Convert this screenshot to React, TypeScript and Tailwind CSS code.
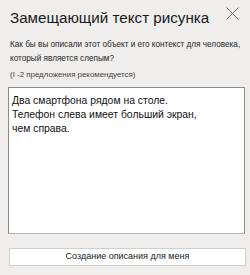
export default function App() {
  return (
    <div
      className="w-[250px] h-[275px] bg-[#efeeec] relative overflow-hidden"
      style={{ fontFamily: '"Liberation Sans", Arial, sans-serif' }}
    >
      <div className="flex items-start justify-between pl-[10px] pr-[11px] pt-[7px]">
        <div className="text-[15.2px] leading-[21px] text-[#1a1a1a]">Замещающий текст рисунка</div>
        <svg width="13" height="13" viewBox="0 0 13 13" className="mt-[0px]">
          <path d="M0.5 0.5 L12.5 12.5 M12.5 0.5 L0.5 12.5" stroke="#6b6b6b" strokeWidth="1" fill="none" />
        </svg>
      </div>
      <div className="pl-[10px] pt-[10px] text-[8.2px] leading-[14px] text-[#262626]">
        Как бы вы описали этот объект и его контекст для человека,
        <br />
        который является слепым?
      </div>
      <div className="pl-[10px] pt-[4px] text-[7.9px] leading-[10px] text-[#444]">
        (I -2 предложения рекомендуется)
      </div>
      <div className="ml-[8px] mt-[7px] w-[237px] h-[147px] bg-white border border-[#8a8a8a] border-b-[#b5b5b5] px-[3px] pt-[6px] text-[10.4px] leading-[14px] text-[#111]">
        Два смартфона рядом на столе.
        <br />
        Телефон слева имеет больший экран,
        <br />
        чем справа.
      </div>
      <div className="ml-[9px] mt-[14px] w-[237px] h-[18px] bg-white border border-[#cfcfcf] flex items-center justify-center text-[9px] text-[#1a1a1a]">
        Создание описания для меня
      </div>
    </div>
  );
}
